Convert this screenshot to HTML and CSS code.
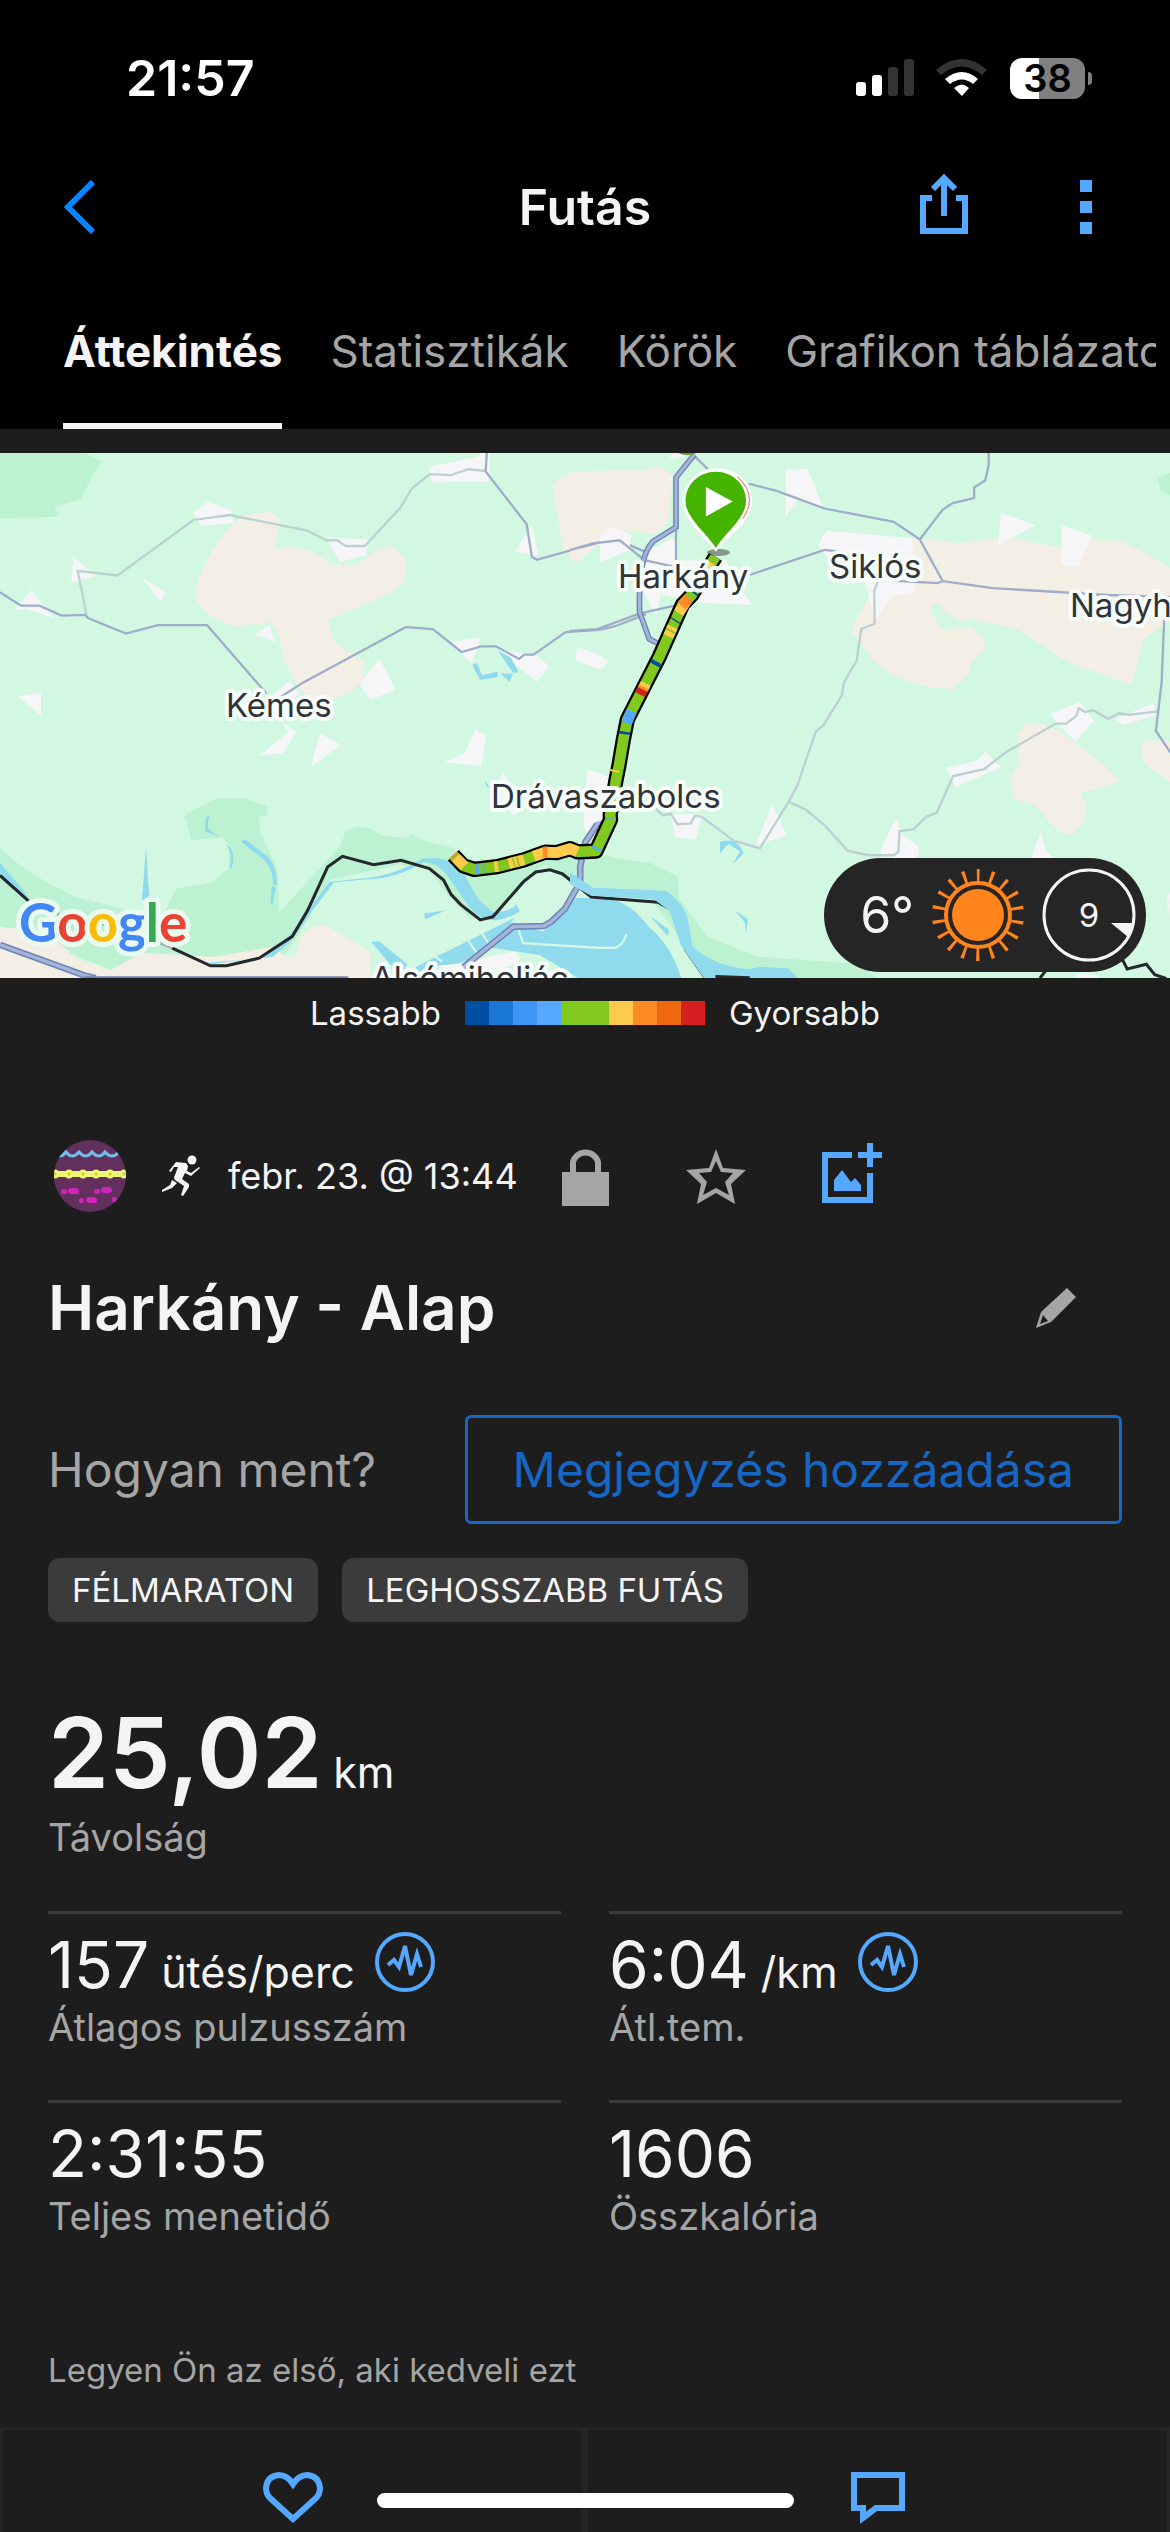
FILE: index.html
```
<!DOCTYPE html>
<html lang="hu">
    <head>
        <meta charset="utf-8">
        <meta name="viewport" content="width=device-width, initial-scale=1">
        <title>Futás</title>
        <link rel="stylesheet" href="styles.css">
    </head>
    <body>
        <header class="top">
            <div class="status">
                <span class="clock">21:57</span>
                <div class="status-icons">
                    <svg width="58" height="38" viewBox="0 0 58 38">
                        <rect x="0" y="23" width="10" height="14" rx="3" fill="#fff"/>
                        <rect x="16" y="16" width="10" height="21" rx="3" fill="#fff"/>
                        <rect x="32" y="8" width="10" height="29" rx="3" fill="#333"/>
                        <rect x="48" y="0" width="10" height="37" rx="3" fill="#333"/>
                    </svg>
                    <svg width="52" height="38" viewBox="0 0 52 38">
                        <path d="M0 11Q26-11 51 11l-5 5Q26-1 5 16z" fill="#333"/>
                        <path d="M9 20Q26 6 42 20l-5 5Q26 16 14 25z" fill="#fff"/>
                        <path d="M18 29q8-7 15 0l-7 8z" fill="#fff"/>
                    </svg>
                    <div class="battery"><span class="battery-level">38</span></div>
                </div>
            </div>
            <div class="navbar">
                <button class="icon-button back" aria-label="Vissza">
                    <svg width="32" height="54" viewBox="0 0 32 54"><path d="M29 2L4 27l25 25" fill="none" stroke="#0a84ff" stroke-width="6"/></svg>
                </button>
                <h1>Futás</h1>
                <div class="nav-actions">
                    <button class="icon-button" aria-label="Megosztás">
                        <svg width="48" height="60" viewBox="0 0 48 60" fill="none" stroke="#54a8ff" stroke-width="6">
                            <path d="M12 24H3v33h42V24h-9M24 42V5M13 15L24 4l11 11"/>
                        </svg>
                    </button>
                    <button class="icon-button" aria-label="Több">
                        <svg width="12" height="54" viewBox="0 0 12 54" fill="#54a8ff"><path d="M0 0h12v12H0zM0 21h12v12H0zM0 42h12v12H0z"/></svg>
                    </button>
                </div>
            </div>
            <nav class="tabs">
                <a class="tab active" href="#attekintes">Áttekintés</a>
                <a class="tab" href="#statisztikak">Statisztikák</a>
                <a class="tab" href="#korok">Körök</a>
                <a class="tab" href="#grafikon">Grafikon táblázatok</a>
            </nav>
        </header>

        <main>
            <section class="map">
                <svg class="map-canvas" viewBox="0 0 1170 525" preserveAspectRatio="xMidYMid slice">
                    <!-- western half of the map -->
                    <g transform="translate(0 -13) scale(.3827)">
                        <path fill="#bcf1d2" d="M0 0H150L266 56 240 95 211 156 143 172 152 200 0 206z"/>
                        <path fill="#bcf1d2" d="M0 1065Q60 1130 200 1195L420 1250 462 1172 555 1155 598 1118 600 1060 580 1038 500 1046 483 978 568 936H638L698 957V980L678 983 680 1025 725 1120 729 1235 890 1060 903 1022 935 1010 968 1015 1000 1035 1063 1040 1075 1028 1100 1045 1180 1065 1250 1120 1400 1110 1490 1060 1620 1095 1700 1105 1770 1140 1775 1200 1850 1300 1980 1350 2250 1370 2290 1406H1900L1800 1330 1700 1200 1560 1175 1420 1110 1290 1245 1230 1250 1170 1190 1120 1120 1040 1110 860 1150 800 1260 740 1350 600 1380 380 1340 290 1385 0 1270z"/>
                        <g fill="#f4efe5">
                            <path d="M508 412L522 352Q580 225 645 195L705 188 732 208 716 287 760 278 810 288 870 326H932L985 288 1027 278 1058 310V365L1030 396 857 470 873 528 951 580 948 630 915 660 860 680 810 675 775 640 740 570 730 510 711 476 608 486 548 460z"/>
                            <path d="M1443 120L1460 100 1530 82 1600 80H1700V200L1560 275 1508 320 1472 290z"/>
                            <path d="M0 1272L120 1285 200 1355 290 1385 370 1340 560 1350 710 1325 750 1352 775 1345 788 1290 820 1270H855L968 1338V1406H0z"/>
                        </g>
                        <g fill="#f6f6f8">
                            <path d="M506 190l35-28 62 20 8 35-85 8zM192 306l58 50-64 15zM370 358l62 40-12 25zM82 391l32 42-75 12zM50 436l60-6 33 36zM666 508l38-25 14 44zM1122 70l130-26 5-10h25l-6 74-148 3zM853 253l113 8-12 40-67 18zM1390 222l17 80-62-10zM1178 527l78-10-24 68zM1300 550l100 10 34 32-30 40zM1512 543l60 20v38l-67-25zM991 571l43 81-66 27-28-40zM46 670l61-10v59zM713 665l42-34 28 30-20 18-50 8zM735 735l38 28-33 55-61 7 74-62zM835 766l55 30-77 58zM1242 757l28 15-12 80-96-10 52-24zM1315 868l50 80-18 35-60-60zM1535 860l80 30-25 170-65-45z"/>
                            <path d="M1150 1375l200-40 8 30-130 45z"/>
                        </g>
                        <g fill="#90daee">
                            <path d="M382 1060l4 80 5 60-20 2zM630 1050l10-7 62 47q25 35 20 75l-9-5q2-35-20-60zM710 1165l10 5-9 52-4-20zM538 985l10-3q-10 30 0 38l28 20-40-18zM590 1055q30 20 15 65l-6-5q12-25-9-60zM1108 1237l58-8-55 23zM1300 549l35 20 20 38-14 2zM1234 587l12-4 14 32 40-10v14l-46 8zM1307 610h34l-10 22zM1268 890l12 20-10-5z"/>
                            <path d="M0 1105l60 70 15 22q-50-20-75-55zM370 1290l180 80 130-18 75-55 105-142 90-10q80-5 155-52h40q55 10 75 55l30 52 35 32q40 5 65-18l8 18q-80 50-130-10l-60-85q-25-32-60-34-75 45-150 45l-85 8-50 65-65 90-45 40-170 15-145-55z"/>
                            <path d="M970 1312l20-2 75 60-20 30zM1085 1378l260-130-60 80-85 40-55 5-20 33-30-10zM1240 1320l100-60 80 25 75-88h100q60 20 100 75 60 50 85 134h-270l-100-60z"/>
                        </g>
                        <path fill="none" stroke="#d6f7e3" stroke-width="6" d="M1215 1295l30 45M1255 1280l30 50M1355 1280l12 35 200 12h40q20-5 30-35M1125 1342l30 20"/>
                        <g fill="none" stroke="#b9d3cf" stroke-width="6">
                            <path d="M226 456L203 342l104 12L505 209l95-13 203 41 50 25h28l22 15h50l93-100 30-50 47-38 55 3 45-16 45 5"/>
                        </g>
                        <g fill="none" stroke="#9fadca" stroke-width="6">
                            <path d="M0 398l55 35h48l58 26 62-2 7 8 99 41 84-22h128l155 178M735 670l60-38 265-143 71 5 75 60 52-15h38l60 33 14-11h24l84-59 80-5q40-5 80-22l50-20"/>
                            <path d="M1272 34l-3 48 107 138 14 86 13 7 160-45 60-8 30 18 70 30"/>
                        </g>
                        <g fill="none">
                            <path stroke="#7182b4" stroke-width="17" d="M0 1319l220 80 30 7M1570 990l-40 60-14 65v40l-40 70-35 33-20 12-80 2-130 105"/>
                            <path stroke="#a3b5d8" stroke-width="9" d="M0 1319l220 80 30 7M1570 990l-40 60-14 65v40l-40 70-35 33-20 12-80 2-130 105"/>
                            <path stroke="#7182b4" stroke-width="5" d="M220 1404h690"/>
                            <path stroke="#25282b" stroke-width="8" d="M0 1138l75 67M450 1328l100 46h42l85-20 87-57 40-68 52-113 39-28 81 22 72-12 74 22 37 30 20 38 25 26 51 40 33-8 80-92 32-25 37-6 33 11 75 60 175 14 32 18 27 35 12 70 60 86 50-6 75 8"/>
                            <path stroke="#a6a9aa" stroke-width="8" d="M75 1205l110 48 150 20 115 55"/>
                        </g>
                    </g>
                    <!-- eastern half of the map -->
                    <g transform="translate(570 -13) scale(.3827)">
                        <path fill="#bcf1d2" d="M1568 85l-33 15 8 30 25 15z"/>
                        <g fill="#f4efe5">
                            <path d="M0 84h135l30 10 67-28 36 28-12 120-31 32-150-18-75 90v-60z"/>
                            <path d="M860 255l90 5 60 10 90-12 80 3 105 20 70-20 90 3 123 70v140l-70 45-30 120-160-55-140-90-120-25-30 3-30-18q-20-10-15-23l-23-5-7 25 30 45 70-8 35 25 8 30-35 35-15 40-35 33q-130-5-210-75-40-65-55-70 0-30 70-130z"/>
                            <path d="M1190 742h40l50 20 110 82 45 45-40 18-60 12 15 35-10 50-25 25-28 2-50-50-20-25-57-20-10-50 22-40v-80zM1568 790l-62-9-15 25 10 40 67 47z"/>
                        </g>
                        <g fill="#f6f6f8">
                            <path d="M564 78l58-2 38 98-65-20-31 46zM264 38l40-3 10 5-50 11zM78 246l32-18 50 20-5 40-76 32zM195 295l75-40 8 60 130 0 30 60 38 56-150-7-90-20-10 55-50-90zM670 237l223 20 15 100-190 20-60-90-10-12zM770 370l135-2-8 35-52 3-48 65zM1126 190l90 33-98 53zM1284 222l79 28-36 82-43-4zM18 543l84 32-20 26-67-26zM1256 715l75-30 38 48-48 55-50-50zM1425 730l100-42 5 32-85 25zM984 856l80-18 22-24 40 41-118 52zM263 978h82l-15 64-55-2zM527 950l40 83-80 25zM852 987l18 45 42 32-3 28h-95l-2-22zM1230 1022l14 50 17 20h-55zM45 860l50 20v110l-60 20zM1330 1392l50 8v6h-60zM1568 1185l-8 2 3 60z"/>
                        </g>
                        <g fill="#90daee">
                            <path d="M392 1050q45-15 62 30l-30 30 20-35-30-20-22 25zM208 1244l50 35-2 18zM430 1228l35 25-5 36-3-28z"/>
                            <path d="M0 1130l60 40 190 8q50 35 58 75l12 70q60 55 150 60l30-7 70 5 25 25H350l-60-85-30-90-40-30-165-10-55-30z"/>
                        </g>
                        <g fill="none" stroke="#bccfd3" stroke-width="6">
                            <path d="M805 368l-10 26 1 86-35 14-12 83-33 56-6 35-48 78-20 17-48 140-23 43-75 121-68-20-85-63-17-2-10 20-35 2-18-28-20 5-30-28M570 945l45 20 50 41 60 67 55 12h65l13-8 3-55 37-5 33-33 27-9 43-97 81-18 57-44 130-75h28l26-20 6-20 17 10 20-5 40 22 30-14 25 4 75-9"/>
                        </g>
                        <g fill="none" stroke="#9fadca" stroke-width="6">
                            <path d="M325 42l35 34M467 114l73 19 125 46 181 35 68 46 60-78 26-17 56-13v-28l29-18 9-40V34M914 260l60 109-14 5-110-6M974 369l130 18 300 18 164 5M465 354l200-67 55 6M0 288l60-18 70-8 65 52 90 20M0 499l72-5 111-41 100-22M277 230v130M1553 460l-7 172-15 128 40 60"/>
                        </g>
                        <g fill="none">
                            <path stroke="#7182b4" stroke-width="15" d="M325 38l-48 60v130l-60 37q-40 40-35 185l25 70 20 10"/>
                            <path stroke="#a3b5d8" stroke-width="8" d="M325 38l-48 60v130l-60 37q-40 40-35 185l25 70 20 10"/>
                            <path stroke="#25282b" stroke-width="8" d="M1228 1406l35-45M1442 1355l14 27 50-12 22 27 30 10M380 1402l90 3"/>
                        </g>
                        <!-- recorded track, coloured by pace -->
                        <g fill="none" stroke-linejoin="round">
                            <path stroke="#000" stroke-width="40" d="M380 305L318 405 294 430 234 565 150 730 139 785 128 850 120 890 105 980 106 992 68 1074 20 1076 0 1068-35 1078-65 1077-120 1097-190 1115-250 1122-278 1113-305 1085"/>
                            <path stroke="#81c91d" stroke-width="28" d="M380 305L318 405 294 430 234 565 150 730 139 785 128 850 120 890 105 980 106 992 68 1074 20 1076 0 1068-35 1078-65 1077-120 1097-190 1115-250 1122-278 1113-305 1085"/>
                            <g stroke-width="28">
                                <path stroke="#fdca4c" d="M370 321L330 386M306 418L284 452M268 488L257 513M198 636L192 648M116 862l-1 5M20 1076L0 1068-35 1078-65 1077-95 1088M-120 1097L-160 1107M-188 1114l-10 1M-276 1114L-299 1091"/>
                                <path stroke="#fd8a25" d="M350 353L330 386M310 413L292 434M193 646l-3 6M-59 1077h-12"/>
                                <path stroke="#d61f20" d="M190 652l-7 13"/>
                                <path stroke="#54a8ff" d="M161 708L148 740M106 985v4M72 1065l-3 6M-238 1121l-8 1M-224 1119l-4 1"/>
                                <path stroke="#004ea3" d="M324 395l-3 4M276 470l-2 3M227 579l-5 9M143 762l-1 7"/>
                                <path stroke="#81c91d" d="M264 497l-2 4M-138 1102l4-1M-148 1104l3-1"/>
                                <path stroke="#fd8a25" d="M-302 1088l-3-3"/>
                            </g>
                        </g>
                        <ellipse cx="388" cy="294" rx="30" ry="9" fill="#35382f" opacity=".5"/>
                        <path fill="#fff" d="M386 74c47 0 90 36 90 86 0 52-60 88-95 132-32-44-86-80-86-132 0-50 42-86 91-86z"/>
                        <path fill="none" stroke="#f08080" stroke-width="3" d="M437 95q55 50 15 110"/>
                        <path fill="#45b400" d="M381 83c43 0 79 32 79 77 0 43-52 80-79 122-27-42-79-79-79-122 0-45 36-77 79-77z"/>
                        <path fill="#fff" d="M355 123l70 38-70 39z"/>
                        <path fill="#6a9d3b" d="M283 34h48q-22 12-48 0z"/>
                    </g>
                    <g class="place">
                        <text x="226" y="264">Kémes</text>
                        <text x="618" y="135">Harkány</text>
                        <text x="829" y="125">Siklós</text>
                        <text x="1070" y="164">Nagyh</text>
                        <text x="491" y="355">Drávaszabolcs</text>
                        <text x="371" y="537">Alsómiholjác</text>
                    </g>
                    <text class="google" x="19" y="489"><tspan fill="#4285f4">G</tspan><tspan fill="#ea4335">o</tspan><tspan fill="#fbbc05">o</tspan><tspan fill="#4285f4">g</tspan><tspan fill="#34a853">l</tspan><tspan fill="#ea4335">e</tspan></text>
                </svg>
                <div class="weather">
                    <span class="temperature">6°</span>
                    <svg width="92" height="94" viewBox="0 0 92 94">
                        <circle cx="46" cy="47" r="26" fill="#ff841c"/>
                        <circle cx="46" cy="47" r="32" fill="none" stroke="#ff841c" stroke-width="4"/>
                        <circle cx="46" cy="47" r="39" fill="none" stroke="#ff841c" stroke-width="14" stroke-dasharray="3 10.614" stroke-dashoffset="1.5" transform="rotate(-90 46 47)"/>
                    </svg>
                    <div class="wind">
                        <svg width="94" height="94" viewBox="0 0 94 94">
                            <circle cx="47" cy="47" r="45" fill="none" stroke="#f4f4f4" stroke-width="3"/>
                            <path d="M69 55h23l-6 14z" fill="#f4f4f4"/>
                        </svg>
                        <span class="wind-speed">9</span>
                    </div>
                </div>
            </section>

            <div class="legend">
                <span>Lassabb</span>
                <div class="scale">
                    <i class="navy"></i><i class="blue"></i><i class="azure"></i><i class="sky"></i><i class="green"></i><i class="green"></i><i class="yellow"></i><i class="amber"></i><i class="orange"></i><i class="red"></i>
                </div>
                <span>Gyorsabb</span>
            </div>

            <div class="meta">
                <svg class="avatar" width="72" height="72" viewBox="0 0 72 72">
                    <clipPath id="round"><circle cx="36" cy="36" r="36"/></clipPath>
                    <g clip-path="url(#round)">
                        <path d="M0 0h72v72H0z" fill="#632f5c"/>
                        <path d="M-1 12q7 8 13 0 6 8 13 0 7 8 13 0 7 8 13 0 7 8 14 0" fill="none" stroke="#73bdea" stroke-width="3"/>
                        <path d="M0 34h72" stroke="#ecf873" stroke-width="6"/>
                        <g fill="#e0c21b" stroke="#ecf873" stroke-width="3">
                            <circle cx="1" cy="34" r="3"/><circle cx="15" cy="34" r="3"/><circle cx="29" cy="34" r="3"/><circle cx="42" cy="34" r="3"/><circle cx="56" cy="34" r="3"/><circle cx="70" cy="34" r="3"/>
                        </g>
                        <g fill="#d025bd">
                            <rect x="7" y="49" width="6" height="5" rx="2"/><rect x="14" y="48" width="11" height="6" rx="3"/>
                            <rect x="40" y="49" width="6" height="5" rx="2"/><rect x="47" y="47" width="11" height="6" rx="3"/>
                            <rect x="25" y="58" width="5" height="5" rx="2"/><rect x="32" y="57" width="11" height="6" rx="3"/>
                            <rect x="58" y="57" width="5" height="5" rx="2"/>
                        </g>
                    </g>
                </svg>
                <svg class="runner" width="38" height="42" viewBox="0 0 38 42" fill="#f4f4f4">
                    <circle cx="30" cy="5" r="4.5"/>
                    <path d="M14 7l10 1 2 3-1 5 4 2 8-6 1 1-9 8-6-3-3 6 7 5v3l-6 9-2-1 3-9-9-6q-2-2 0-5l3-8-4 0-3 5-2-1z"/>
                    <path d="M10 25l5 3-5 5-10 4v-2l8-5z"/>
                </svg>
                <time>febr. 23. @ 13:44</time>
                <svg class="lock" width="48" height="60" viewBox="0 0 48 60">
                    <path d="M0 26h47v34H0z" fill="#a5a5a5"/>
                    <path d="M11 28V16a13 13 0 0 1 25 0v12" fill="none" stroke="#a5a5a5" stroke-width="6"/>
                </svg>
                <button class="icon-button star" aria-label="Kedvenc">
                    <svg width="60" height="60" viewBox="0 0 60 60"><path d="M30 3l7 19 23 2-15 14 4 20-19-11-19 11 4-20L0 24l23-2zM30 15l-5 11-12 1 8 9-4 13 13-7 13 7-4-13 8-9-12-1z" fill="#a5a5a5" fill-rule="evenodd"/></svg>
                </button>
                <button class="icon-button photo" aria-label="Fotó hozzáadása">
                    <svg width="60" height="66" viewBox="0 0 60 66">
                        <path d="M30 12H3v45h45V30M48 0v24M36 12h24" fill="none" stroke="#54a8ff" stroke-width="6"/>
                        <path d="M12 48V37l8-10 9 12 4-4 6 7v6z" fill="#54a8ff"/>
                    </svg>
                </button>
            </div>

            <div class="title-row">
                <h2>Harkány - Alap</h2>
                <button class="icon-button" aria-label="Szerkesztés">
                    <svg width="40" height="40" viewBox="0 0 40 40"><path d="M31 0l9 9-25 25-15 6 5-16zM7 27l-3 9 8-3z" fill="#a5a5a5" fill-rule="evenodd"/></svg>
                </button>
            </div>

            <div class="feedback">
                <span>Hogyan ment?</span>
                <button class="note">Megjegyzés hozzáadása</button>
            </div>

            <div class="badges">
                <span class="badge">FÉLMARATON</span>
                <span class="badge">LEGHOSSZABB FUTÁS</span>
            </div>

            <div class="distance">
                <div><span class="big">25,02</span> <span class="unit">km</span></div>
                <div class="label">Távolság</div>
            </div>

            <div class="stats">
                <div class="stat">
                    <div class="value">157 <span class="unit">ütés/perc</span>
                        <svg class="pulse" width="60" height="60" viewBox="0 0 60 60" fill="none" stroke="#54a8ff"><circle cx="30" cy="30" r="28" stroke-width="4"/><path d="M13 33l6-5 5 7 6-21 6 29 6-21 4 13" stroke-width="4"/></svg>
                    </div>
                    <div class="label">Átlagos pulzusszám</div>
                </div>
                <div class="stat">
                    <div class="value">6:04 <span class="unit">/km</span>
                        <svg class="pulse" width="60" height="60" viewBox="0 0 60 60" fill="none" stroke="#54a8ff"><circle cx="30" cy="30" r="28" stroke-width="4"/><path d="M13 33l6-5 5 7 6-21 6 29 6-21 4 13" stroke-width="4"/></svg>
                    </div>
                    <div class="label">Átl.tem.</div>
                </div>
                <div class="stat">
                    <div class="value">2:31:55</div>
                    <div class="label">Teljes menetidő</div>
                </div>
                <div class="stat">
                    <div class="value">1606</div>
                    <div class="label">Összkalória</div>
                </div>
            </div>

            <p class="likes">Legyen Ön az első, aki kedveli ezt</p>
        </main>

        <footer class="actions">
            <button class="action" aria-label="Kedvelés">
                <svg width="60" height="54" viewBox="0 0 60 54"><path d="M30 47L7 26Q3 22 3 16 4 4 16 3q8 0 14 9 6-9 14-9 12 1 13 13 0 6-4 10z" fill="none" stroke="#54a8ff" stroke-width="6"/></svg>
            </button>
            <button class="action" aria-label="Hozzászólás">
                <svg width="54" height="54" viewBox="0 0 54 54"><path d="M3 3h48v33H25L12 46V36H3z" fill="none" stroke="#54a8ff" stroke-width="6"/></svg>
            </button>
            <div class="home-bar"></div>
        </footer>
    </body>
</html>
```

FILE: styles.css
```
* {
    box-sizing: border-box;
}

body {
    margin: 0;
    display: flex;
    flex-direction: column;
    min-height: 100vh;
    background-color: #1d1d1d;
    color: #f4f4f4;
    font-family: Inter, "Liberation Sans", sans-serif;
    font-size: 38px;
    overflow-x: hidden;
}

h1, h2, p {
    margin: 0;
}

svg {
    display: block;
    flex: none;
}

.icon-button {
    padding: 0;
    border: 0;
    background: none;
}

/* header */
.top {
    background-color: #000;
}

.status {
    display: flex;
    justify-content: space-between;
    align-items: center;
    height: 156px;
    padding: 0 78px 0 126px;
}

.clock {
    color: #fff;
    font-size: 50px;
    font-weight: 600;
}

.status-icons {
    display: flex;
    align-items: center;
    gap: 22px;
}

.battery {
    position: relative;
    width: 75px;
    height: 41px;
    margin-right: 7px;
    border-radius: 12px;
    background: linear-gradient(to right, #fff 29px, #808080 29px);
    color: #000;
    font-size: 38px;
    font-weight: 600;
    line-height: 41px;
    text-align: center;
}

.battery::after {
    content: "";
    position: absolute;
    left: 78px;
    top: 14px;
    width: 4px;
    height: 13px;
    border-radius: 0 4px 4px 0;
    background-color: #808080;
}

.navbar {
    display: grid;
    grid-template-columns: 1fr auto 1fr;
    align-items: center;
    height: 102px;
    padding: 0 78px 0 64px;
}

.back {
    justify-self: start;
}

.navbar h1 {
    padding-left: 14px;
    font-size: 50px;
    font-weight: 600;
}

.nav-actions {
    display: flex;
    justify-content: flex-end;
    align-items: flex-end;
    gap: 112px;
    padding-bottom: 6px;
}

.tabs {
    display: flex;
    gap: 48px;
    height: 171px;
    margin: 0 14px 0 63px;
    overflow: hidden;
    white-space: nowrap;
}

.tab {
    flex: none;
    padding-top: 66px;
    color: #a5a5a5;
    font-size: 44px;
    line-height: 54px;
    text-decoration: none;
}

.tab.active {
    border-bottom: 6px solid #f4f4f4;
    color: #f4f4f4;
    font-weight: 700;
}

/* map */
.map {
    position: relative;
    margin-top: 24px;
    background-color: #d3f8e2;
}

.map-canvas {
    width: 100%;
    height: 525px;
}

.place {
    fill: #303338;
    stroke: #f6fcf9;
    stroke-width: 8px;
    stroke-linejoin: round;
    paint-order: stroke;
    font-size: 33px;
}

.google {
    font-family: Lato, sans-serif;
    font-size: 53px;
    font-weight: 700;
    stroke: #eafaf1;
    stroke-width: 10px;
    stroke-linejoin: round;
    paint-order: stroke;
}

.weather {
    position: absolute;
    right: 24px;
    bottom: 6px;
    display: flex;
    align-items: center;
    gap: 18px;
    height: 114px;
    padding: 0 10px 0 36px;
    border-radius: 57px;
    background-color: #252525;
}

.temperature {
    font-size: 50px;
}

.wind {
    position: relative;
}

.wind-speed {
    position: absolute;
    inset: 0;
    font-size: 33px;
    line-height: 94px;
    text-align: center;
}

.legend {
    display: flex;
    justify-content: center;
    align-items: center;
    gap: 24px;
    height: 70px;
    padding-left: 20px;
    font-size: 33px;
}

.scale {
    display: flex;
}

.scale i {
    width: 24px;
    height: 24px;
}

.navy { background-color: #004ea3; }
.blue { background-color: #1a77d6; }
.azure { background-color: #3d95f5; }
.sky { background-color: #54a8ff; }
.green { background-color: #81c91d; }
.yellow { background-color: #fdca4c; }
.amber { background-color: #fd8a25; }
.orange { background-color: #ed680e; }
.red { background-color: #d61f20; }

/* activity */
.meta {
    display: flex;
    align-items: center;
    height: 72px;
    margin: 92px 54px 0;
}

.runner {
    margin: 0 28px 0 36px;
}

time {
    font-size: 36px;
}

.lock {
    margin-left: 44px;
}

.star,
.photo {
    margin-left: 76px;
}

.title-row {
    display: flex;
    justify-content: space-between;
    align-items: center;
    margin-top: 54px;
    padding: 0 94px 0 48px;
}

h2 {
    font-size: 62px;
    font-weight: 600;
    line-height: 84px;
}

.feedback {
    display: flex;
    justify-content: space-between;
    align-items: center;
    margin-top: 65px;
    padding: 0 48px;
    color: #a5a5a5;
    font-size: 48px;
}

.note {
    height: 109px;
    padding: 0 45px;
    border: 3px solid #1666c5;
    border-radius: 6px;
    background: none;
    color: #1666c5;
    font-family: inherit;
    font-size: 48px;
}

.badges {
    display: flex;
    gap: 24px;
    margin: 34px 48px 0;
}

.badge {
    padding: 0 24px;
    border-radius: 12px;
    background-color: #3b3b3b;
    font-size: 33px;
    line-height: 64px;
}

.distance {
    margin: 71px 48px 0;
}

.big {
    font-size: 98px;
    font-weight: 600;
    line-height: 120px;
}

.unit {
    font-size: 43px;
}

.label {
    color: #a5a5a5;
    font-size: 38px;
    line-height: 48px;
}

.stats {
    display: grid;
    grid-template-columns: 1fr 1fr;
    gap: 0 48px;
    margin: 50px 48px 0;
}

.stat {
    height: 189px;
    padding-top: 11px;
    border-top: 3px solid #3b3b3b;
}

.value {
    display: flex;
    align-items: baseline;
    height: 78px;
    font-size: 64px;
    line-height: 80px;
}

.value .unit {
    margin-left: 12px;
}

.pulse {
    align-self: center;
    margin: 0 0 4px 20px;
}

.likes {
    margin: 59px 48px 0;
    color: #a5a5a5;
    font-size: 33px;
    line-height: 44px;
}

/* bottom bar */
.actions {
    position: relative;
    display: grid;
    grid-template-columns: 1fr 1fr;
    flex: 1;
    margin-top: 35px;
    border-top: 3px solid #252525;
}

.action {
    display: flex;
    justify-content: center;
    padding: 42px 0 0;
    border: 3px solid #252525;
    border-width: 0 3px;
    background: none;
}

.home-bar {
    position: absolute;
    left: 0;
    right: 0;
    bottom: 24px;
    width: 417px;
    height: 15px;
    margin: 0 auto;
    border-radius: 8px;
    background-color: #fff;
}
```
